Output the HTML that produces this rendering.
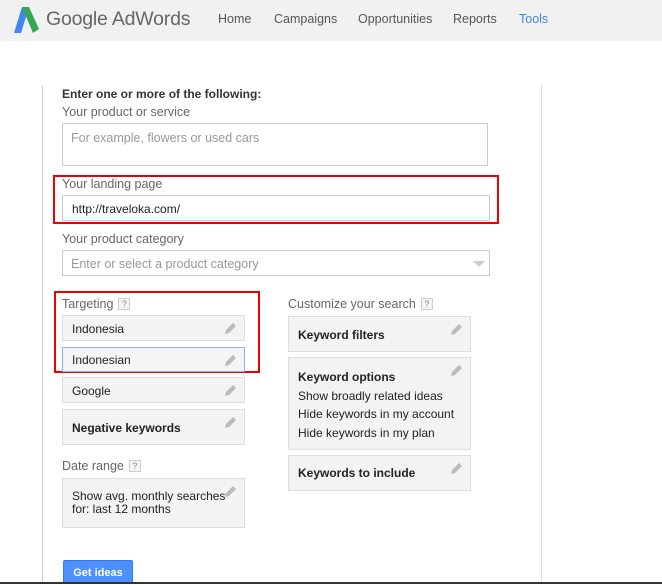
<!DOCTYPE html>
<html><head><meta charset="utf-8"><style>
*{margin:0;padding:0;box-sizing:border-box}
body{width:662px;height:584px;overflow:hidden;background:#fff;font-family:"Liberation Sans",Arial,sans-serif;position:relative}
.a{position:absolute}
.hdr{left:0;top:0;width:662px;height:41px;background:#f1f1f1}
.nav{top:12px;font-size:12.5px;color:#555}
.lbl{font-size:12.5px;color:#666}
.box{border:1px solid #ccc;background:#fff}
.tile{background:#f3f3f3;border:1px solid #ddd;font-size:12px;color:#222}
.tile b{font-weight:bold;color:#222}
.pen{position:absolute;right:7px;top:6px}
.q{display:inline-block;width:12px;height:12px;border:1px solid #ccc;font-size:9px;color:#888;text-align:center;line-height:10px;vertical-align:1px;margin-left:5px;background:#f5f5f5}
.red{border:2px solid #e00}
</style></head><body>
<div class="a hdr"></div>
<svg class="a" style="left:12px;top:7px" width="28" height="26" viewBox="0 0 28 26"><path d="M10 0 L17 0 L9 26 L2 26 Z" fill="#4285f4"/><path d="M10 0 L17 0 L27 22 L21 26 Z" fill="#34a853"/></svg>
<div class="a" style="left:46px;top:8px;font-size:19.5px;color:#666;letter-spacing:-0.2px">Google AdWords</div>
<div class="a nav" style="left:218px">Home</div>
<div class="a nav" style="left:274px">Campaigns</div>
<div class="a nav" style="left:358px">Opportunities</div>
<div class="a nav" style="left:453px">Reports</div>
<div class="a nav" style="left:519px;color:#4285f4">Tools</div>
<div class="a" style="left:42px;top:85px;width:1px;height:499px;background:#ccc"></div>
<div class="a" style="left:541px;top:85px;width:1px;height:499px;background:#ddd"></div>
<div class="a" style="left:62px;top:87px;font-size:12px;font-weight:bold;color:#333">Enter one or more of the following:</div>
<div class="a lbl" style="left:62px;top:105px">Your product or service</div>
<div class="a box" style="left:62px;top:123px;width:426px;height:43px"><span class="a" style="left:8px;top:7px;font-size:12.5px;color:#999">For example, flowers or used cars</span></div>
<div class="a red" style="left:53px;top:175px;width:446px;height:49px"></div>
<div class="a lbl" style="left:62px;top:177px">Your landing page</div>
<div class="a box" style="left:62px;top:195px;width:428px;height:26px"><span class="a" style="left:9px;top:6px;font-size:12px;color:#222">http://traveloka.com/</span></div>
<div class="a lbl" style="left:62px;top:232px">Your product category</div>
<div class="a box" style="left:62px;top:250px;width:428px;height:26px"><span class="a" style="left:8px;top:6px;font-size:12.5px;color:#999">Enter or select a product category</span><span class="a" style="right:4px;top:10px;width:0;height:0;border-left:6px solid transparent;border-right:6px solid transparent;border-top:6px solid #ccc"></span></div>
<div class="a red" style="left:54px;top:291px;width:206px;height:82px"></div>
<div class="a lbl" style="left:62px;top:297px">Targeting<span class="q">?</span></div>
<div class="a lbl" style="left:288px;top:297px">Customize your search<span class="q">?</span></div>
<div class="a tile" style="left:62px;top:315px;width:183px;height:26px;padding:6px 9px">Indonesia<svg class="pen" width="12" height="12" viewBox="0 0 12 12"><path d="M0 12 L1 8 L8 1 L11 4 L4 11 Z" fill="#bbb"/></svg></div>
<div class="a tile" style="left:62px;top:347px;width:183px;height:25px;padding:5px 9px;border-color:#8ab4f8;background:#f5f5f5">Indonesian<svg class="pen" width="12" height="12" viewBox="0 0 12 12"><path d="M0 12 L1 8 L8 1 L11 4 L4 11 Z" fill="#bbb"/></svg></div>
<div class="a tile" style="left:62px;top:377px;width:183px;height:26px;padding:6px 9px">Google<svg class="pen" width="12" height="12" viewBox="0 0 12 12"><path d="M0 12 L1 8 L8 1 L11 4 L4 11 Z" fill="#bbb"/></svg></div>
<div class="a tile" style="left:62px;top:409px;width:183px;height:36px;padding:11px 9px"><b>Negative keywords</b><svg class="pen" width="12" height="12" viewBox="0 0 12 12"><path d="M0 12 L1 8 L8 1 L11 4 L4 11 Z" fill="#bbb"/></svg></div>
<div class="a lbl" style="left:62px;top:459px">Date range<span class="q">?</span></div>
<div class="a tile" style="left:62px;top:478px;width:183px;height:50px;padding:11px 9px;line-height:13px">Show avg. monthly searches<br>for: last 12 months<svg class="pen" width="12" height="12" viewBox="0 0 12 12"><path d="M0 12 L1 8 L8 1 L11 4 L4 11 Z" fill="#bbb"/></svg></div>
<div class="a tile" style="left:288px;top:316px;width:183px;height:36px;padding:11px 9px"><b>Keyword filters</b><svg class="pen" width="12" height="12" viewBox="0 0 12 12"><path d="M0 12 L1 8 L8 1 L11 4 L4 11 Z" fill="#bbb"/></svg></div>
<div class="a tile" style="left:288px;top:357px;width:183px;height:93px;padding:10px 9px;line-height:18.5px"><b>Keyword options</b><br>Show broadly related ideas<br>Hide keywords in my account<br>Hide keywords in my plan<svg class="pen" width="12" height="12" viewBox="0 0 12 12"><path d="M0 12 L1 8 L8 1 L11 4 L4 11 Z" fill="#bbb"/></svg></div>
<div class="a tile" style="left:288px;top:455px;width:183px;height:36px;padding:10px 9px"><b>Keywords to include</b><svg class="pen" width="12" height="12" viewBox="0 0 12 12"><path d="M0 12 L1 8 L8 1 L11 4 L4 11 Z" fill="#bbb"/></svg></div>
<div class="a" style="left:63px;top:560px;width:70px;height:24px;background:#4d90fe;border:1px solid #3079ed;border-radius:2px;color:#fff;font-size:11px;font-weight:bold;text-align:center;line-height:24px">Get ideas</div>
<div class="a" style="left:0;top:582px;width:662px;height:2px;background:#333"></div>
</body></html>
